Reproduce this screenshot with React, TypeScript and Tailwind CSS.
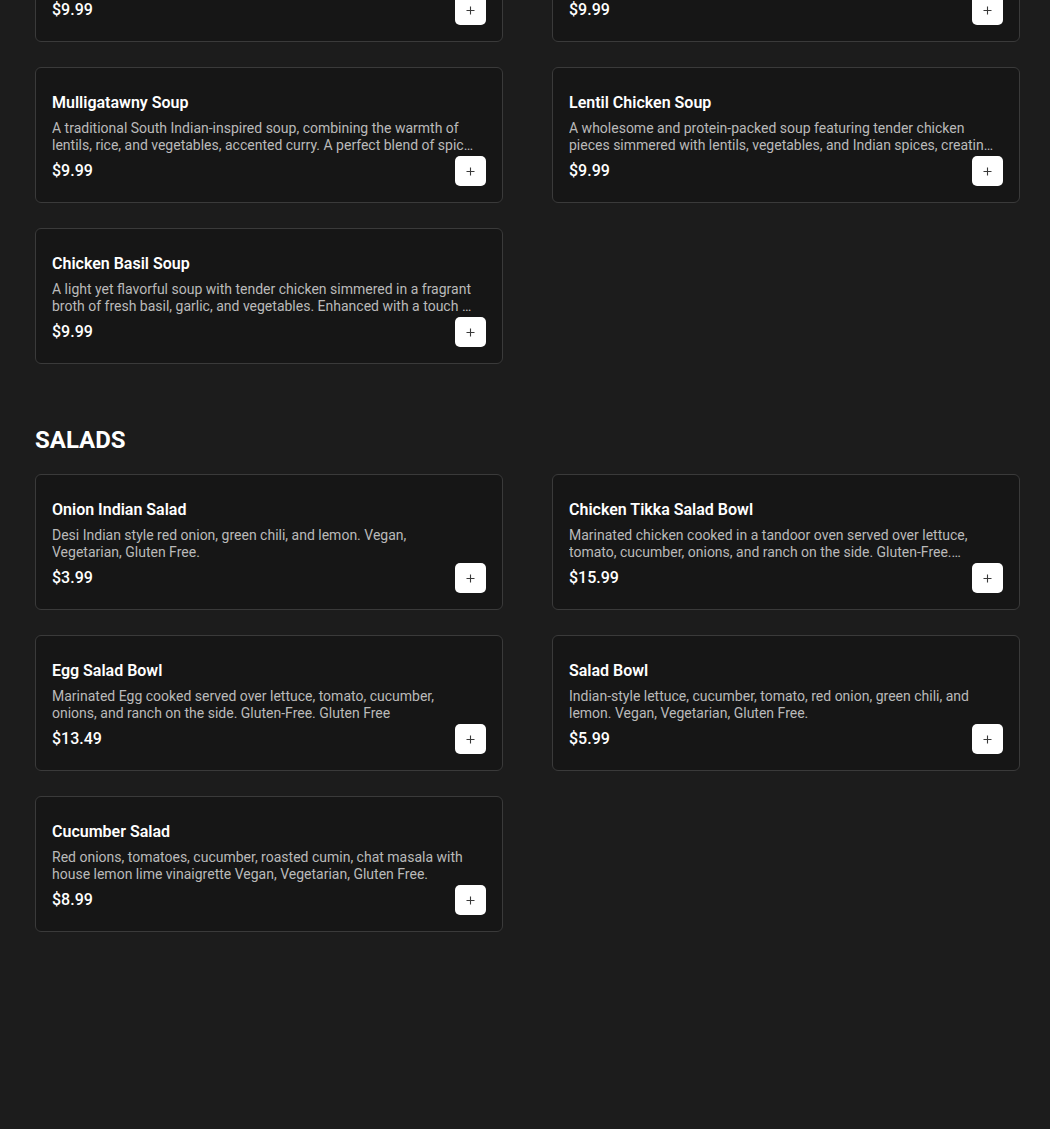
import React from "react";

type Item = { name: string; desc: string; price: string };

const soupsTop: Item[] = [
  { name: "Tomato Soup", desc: "A classic creamy tomato soup simmered with herbs and Indian spices.", price: "$9.99" },
  { name: "Sweet Corn Soup", desc: "A comforting sweet corn soup with vegetables and mild spices.", price: "$9.99" },
];

const soups: Item[] = [
  {
    name: "Mulligatawny Soup",
    desc: "A traditional South Indian-inspired soup, combining the warmth of lentils, rice, and vegetables, accented curry. A perfect blend of spices and flavors for a comforting bowl.",
    price: "$9.99",
  },
  {
    name: "Lentil Chicken Soup",
    desc: "A wholesome and protein-packed soup featuring tender chicken pieces simmered with lentils, vegetables, and Indian spices, creating a hearty and nourishing meal.",
    price: "$9.99",
  },
  {
    name: "Chicken Basil Soup",
    desc: "A light yet flavorful soup with tender chicken simmered in a fragrant broth of fresh basil, garlic, and vegetables. Enhanced with a touch of spices for a soothing taste.",
    price: "$9.99",
  },
];

const salads: Item[] = [
  { name: "Onion Indian Salad", desc: "Desi Indian style red onion, green chili, and lemon. Vegan, Vegetarian, Gluten Free.", price: "$3.99" },
  {
    name: "Chicken Tikka Salad Bowl",
    desc: "Marinated chicken cooked in a tandoor oven served over lettuce, tomato, cucumber, onions, and ranch on the side. Gluten-Free.\nGluten Free",
    price: "$15.99",
  },
  {
    name: "Egg Salad Bowl",
    desc: "Marinated Egg cooked served over lettuce, tomato, cucumber, onions, and ranch on the side. Gluten-Free. Gluten Free",
    price: "$13.49",
  },
  {
    name: "Salad Bowl",
    desc: "Indian-style lettuce, cucumber, tomato, red onion, green chili, and lemon. Vegan, Vegetarian, Gluten Free.",
    price: "$5.99",
  },
  {
    name: "Cucumber Salad",
    desc: "Red onions, tomatoes, cucumber, roasted cumin, chat masala with house lemon lime vinaigrette Vegan, Vegetarian, Gluten Free.",
    price: "$8.99",
  },
];

function Plus() {
  return (
    <svg width="11" height="11" viewBox="0 0 11 11" fill="none">
      <path d="M5.5 1.5v8M1.5 5.5h8" stroke="#3a3a3a" strokeWidth="1.1" />
    </svg>
  );
}

function Card({ item }: { item: Item }) {
  return (
    <div className="h-[136px] rounded-[6px] border border-[#3a3a3a] bg-[#161616] pl-4 pr-4 pt-[25px] pb-4 flex flex-col">
      <div className="text-[16px] leading-5 font-semibold text-white">{item.name}</div>
      <div className="mt-[7px] pr-[7px] text-[14px] leading-[17px] text-[#bababa] line-clamp-2 whitespace-pre-line">
        {item.desc}
      </div>
      <div className="mt-auto flex items-center justify-between">
        <div className="text-[16px] leading-[22px] font-medium text-white -mt-[1px]">{item.price}</div>
        <button className="w-[31px] h-[30px] rounded-[5px] bg-white flex items-center justify-center">
          <Plus />
        </button>
      </div>
    </div>
  );
}

export default function App() {
  return (
    <div
      className="min-h-screen bg-[#1c1c1c] overflow-hidden"
      style={{ fontFamily: "Roboto, 'Liberation Sans', sans-serif" }}
    >
      <div className="pl-[35px] w-[1020px] -mt-[94px] pb-[197px]">
        <div className="grid grid-cols-[468px_468px] gap-x-[49px] gap-y-[25px]">
          {[...soupsTop, ...soups].map((it) => (
            <Card key={it.name} item={it} />
          ))}
        </div>
        <h2 className="mt-[63px] mb-[21px] text-[24px] leading-[26px] font-bold text-white">SALADS</h2>
        <div className="grid grid-cols-[468px_468px] gap-x-[49px] gap-y-[25px]">
          {salads.map((it) => (
            <Card key={it.name} item={it} />
          ))}
        </div>
      </div>
    </div>
  );
}
